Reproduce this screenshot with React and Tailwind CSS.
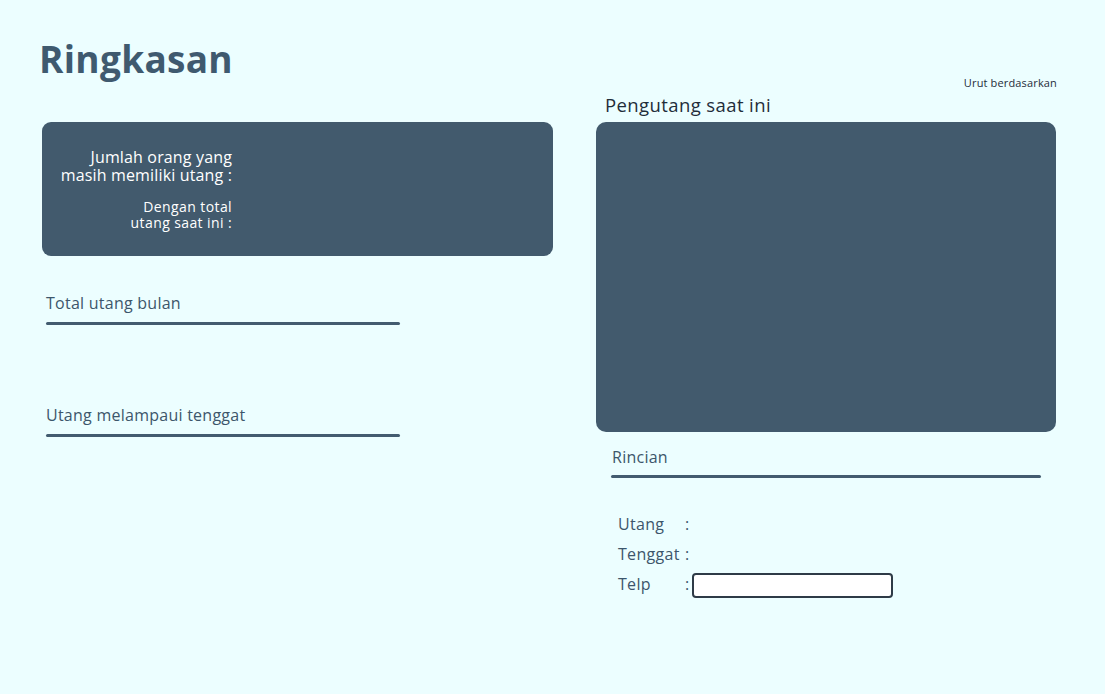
import React from "react";

const font = { fontFamily: '"Open Sans", "Noto Sans", sans-serif' };

function Section({ label, className = "" }) {
  return (
    <div className={className}>
      <div className="ml-[4px] text-[16px] leading-[20px] tracking-[0.25px] text-[#3d566b]">{label}</div>
      <div className="mt-[9px] ml-[4px] h-[3px] w-[354px] rounded-full bg-[#435c70]" />
    </div>
  );
}

export default function App() {
  return (
    <div style={font} className="min-h-[694px] w-full bg-[#ecfeff] text-[#3d566b]">
      <div className="flex gap-[43px] pl-[42px]">
        {/* Left column */}
        <div className="flex w-[511px] flex-col">
          <div className="h-[122px]">
            <h1 className="ml-[-3px] pt-[37px] text-[37px] font-bold leading-[44px] tracking-[0.3px] text-[#3f5a6f]">
              Ringkasan
            </h1>
          </div>
          <div className="h-[134px] rounded-[9px] bg-[#425a6d] pt-[26px] text-white">
            <div className="w-[190px] whitespace-nowrap text-right text-[16px] leading-[18px] tracking-[0.15px]">
              <div>Jumlah orang yang</div>
              <div>masih memiliki utang :</div>
            </div>
            <div className="mt-[15px] w-[190px] whitespace-nowrap text-right text-[14px] leading-[16px] tracking-[0.4px]">
              <div>Dengan total</div>
              <div>utang saat ini :</div>
            </div>
          </div>
          <Section label="Total utang bulan" className="mt-[37px]" />
          <Section label="Utang melampaui tenggat" className="mt-[80px]" />
        </div>

        {/* Right column */}
        <div className="flex w-[460px] flex-col">
          <div className="flex h-[122px] flex-col justify-end pb-[6px]">
            <div className="mr-[-1px] self-end text-[11px] leading-[14px] tracking-[0.15px] text-[#1f2d3a]">
              Urut berdasarkan
            </div>
            <div className="ml-[9px] mt-[4px] text-[18.5px] leading-[22px] tracking-[0.4px] text-[#1f2d3a]">
              Pengutang saat ini
            </div>
          </div>
          <div className="h-[310px] rounded-[10px] bg-[#425a6d]" />
          <div className="mt-[15px] ml-[16px] text-[16px] leading-[20px] tracking-[0.25px] text-[#3d566b]">Rincian</div>
          <div className="mt-[8px] ml-[15px] h-[3px] w-[430px] rounded-full bg-[#435c70]" />
          <div className="ml-[22px] mt-[36px] flex flex-col gap-[10px] text-[16px] leading-[20px] tracking-[0.3px] text-[#3d566b]">
            <div className="flex h-[20px] items-center">
              <span className="w-[67px]">Utang</span>
              <span>:</span>
            </div>
            <div className="flex h-[20px] items-center">
              <span className="w-[67px]">Tenggat</span>
              <span>:</span>
            </div>
            <div className="flex h-[20px] items-center">
              <span className="w-[67px]">Telp</span>
              <span>:</span>
              <div className="ml-[2px] mt-[3px] h-[25px] w-[201px] shrink-0 rounded-[4px] border-2 border-[#2e3b47] bg-white" />
            </div>
          </div>
        </div>
      </div>
    </div>
  );
}
